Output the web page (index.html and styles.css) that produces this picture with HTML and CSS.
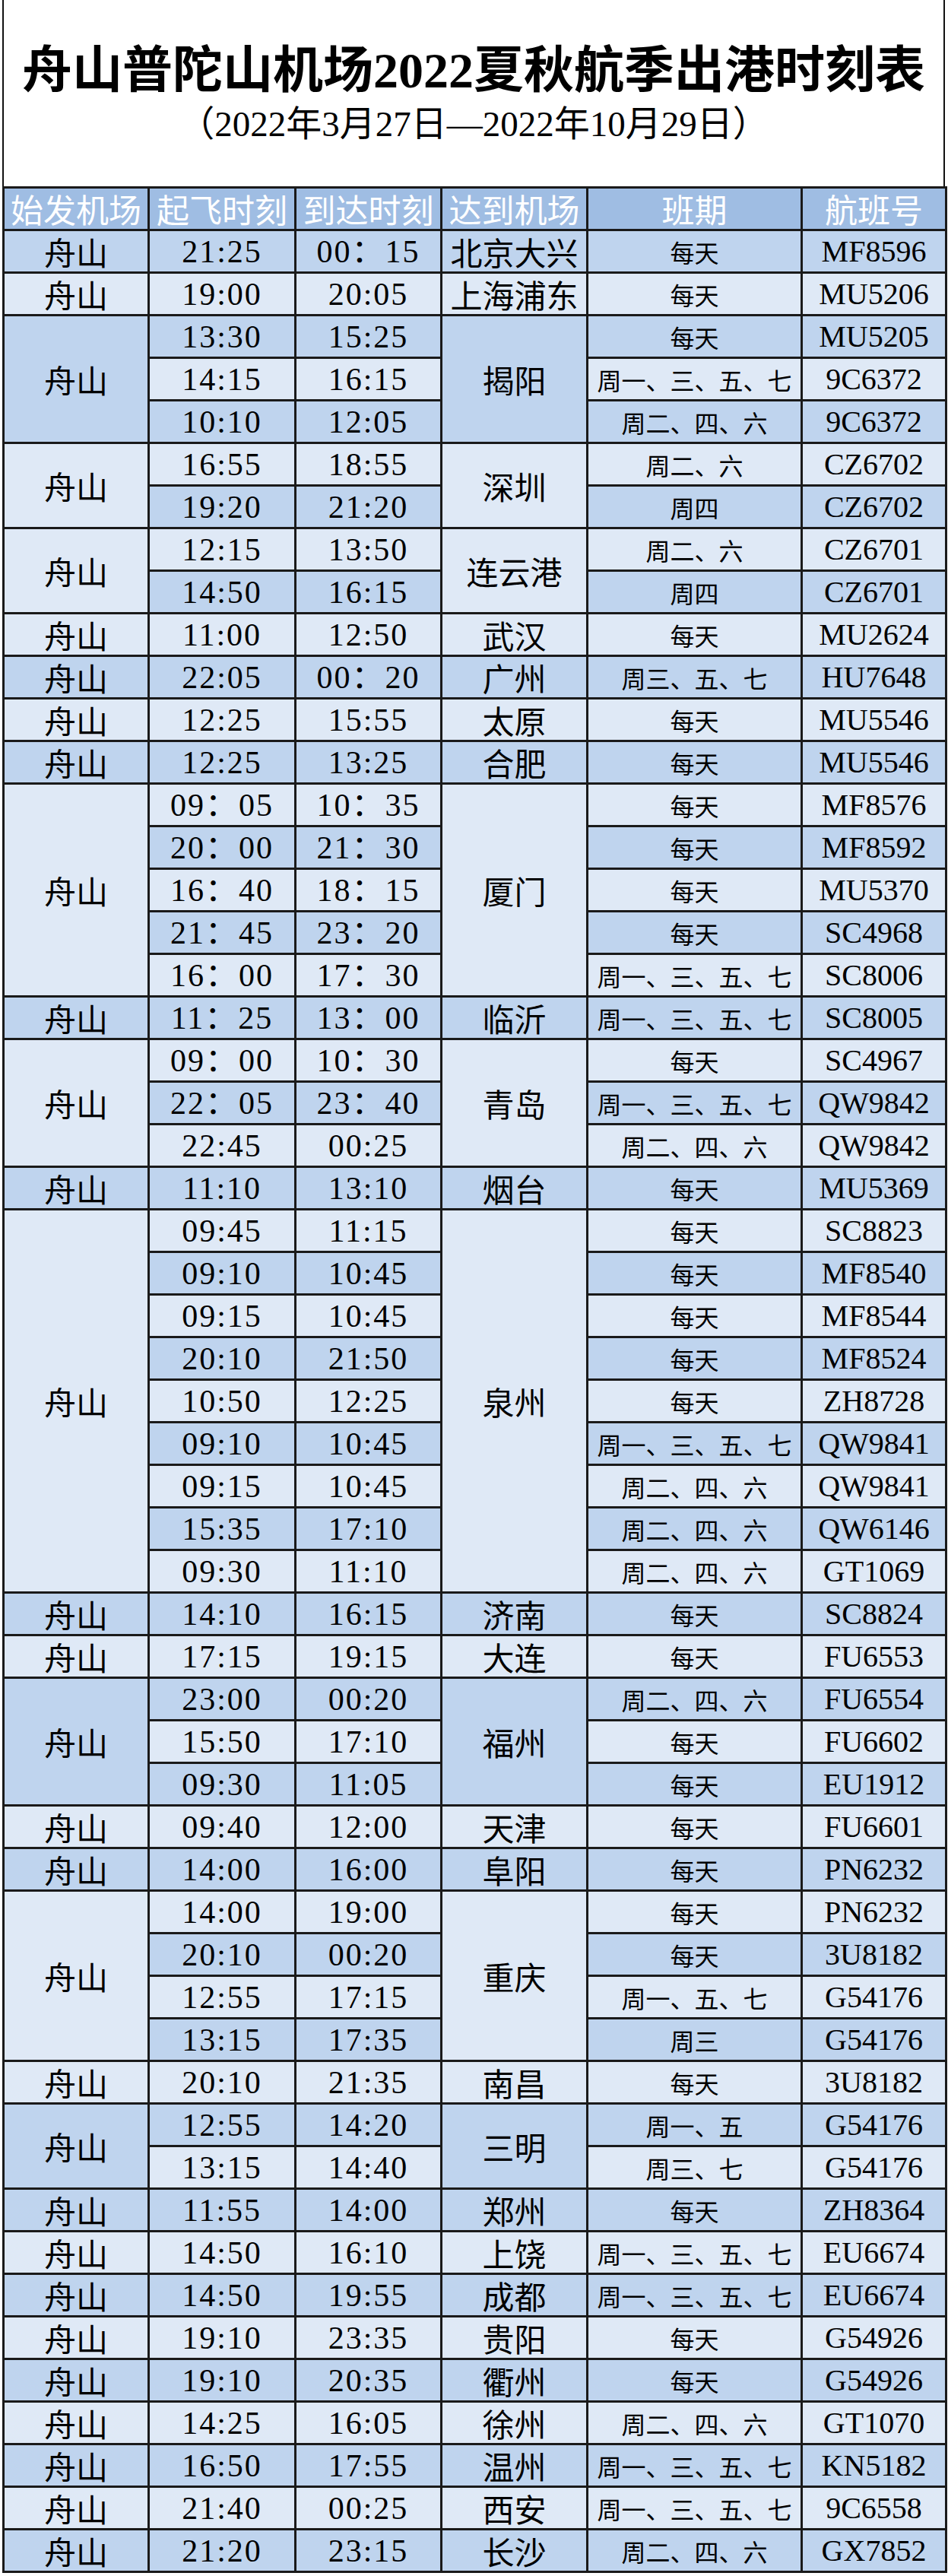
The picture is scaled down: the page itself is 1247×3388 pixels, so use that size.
FILE: index.html
```html
<!DOCTYPE html>
<html lang="zh-CN">
<head>
<meta charset="utf-8">
<title>舟山普陀山机场2022夏秋航季出港时刻表</title>
<link rel="stylesheet" href="styles.css">
</head>
<body>
<div class="sheet">
  <div class="title-box">
    <h1 class="title">舟山普陀山机场2022夏秋航季出港时刻表</h1>
    <p class="subtitle">（2022年3月27日—2022年10月29日）</p>
  </div>
  <table class="sched">
    <colgroup>
      <col class="c1"><col class="c2"><col class="c3"><col class="c4"><col class="c5"><col class="c6">
    </colgroup>
    <thead>
      <tr class="head"><th>始发机场</th><th>起飞时刻</th><th>到达时刻</th><th>达到机场</th><th>班期</th><th>航班号</th></tr>
    </thead>
    <tbody>
      <tr class="d"><td class="cn gd">舟山</td><td class="tm">21:25</td><td class="tm">00：15</td><td class="cn gd">北京大兴</td><td class="sc">每天</td><td class="fn">MF8596</td></tr>
      <tr class="l"><td class="cn gl">舟山</td><td class="tm">19:00</td><td class="tm">20:05</td><td class="cn gl">上海浦东</td><td class="sc">每天</td><td class="fn">MU5206</td></tr>
      <tr class="d"><td class="cn gd" rowspan="3">舟山</td><td class="tm">13:30</td><td class="tm">15:25</td><td class="cn gd" rowspan="3">揭阳</td><td class="sc">每天</td><td class="fn">MU5205</td></tr>
      <tr class="l"><td class="tm">14:15</td><td class="tm">16:15</td><td class="sc">周一、三、五、七</td><td class="fn">9C6372</td></tr>
      <tr class="d"><td class="tm">10:10</td><td class="tm">12:05</td><td class="sc">周二、四、六</td><td class="fn">9C6372</td></tr>
      <tr class="l"><td class="cn gl" rowspan="2">舟山</td><td class="tm">16:55</td><td class="tm">18:55</td><td class="cn gl" rowspan="2">深圳</td><td class="sc">周二、六</td><td class="fn">CZ6702</td></tr>
      <tr class="d"><td class="tm">19:20</td><td class="tm">21:20</td><td class="sc">周四</td><td class="fn">CZ6702</td></tr>
      <tr class="l"><td class="cn gd" rowspan="2">舟山</td><td class="tm">12:15</td><td class="tm">13:50</td><td class="cn gd" rowspan="2">连云港</td><td class="sc">周二、六</td><td class="fn">CZ6701</td></tr>
      <tr class="d"><td class="tm">14:50</td><td class="tm">16:15</td><td class="sc">周四</td><td class="fn">CZ6701</td></tr>
      <tr class="l"><td class="cn gl">舟山</td><td class="tm">11:00</td><td class="tm">12:50</td><td class="cn gl">武汉</td><td class="sc">每天</td><td class="fn">MU2624</td></tr>
      <tr class="d"><td class="cn gd">舟山</td><td class="tm">22:05</td><td class="tm">00：20</td><td class="cn gd">广州</td><td class="sc">周三、五、七</td><td class="fn">HU7648</td></tr>
      <tr class="l"><td class="cn gl">舟山</td><td class="tm">12:25</td><td class="tm">15:55</td><td class="cn gl">太原</td><td class="sc">每天</td><td class="fn">MU5546</td></tr>
      <tr class="d"><td class="cn gd">舟山</td><td class="tm">12:25</td><td class="tm">13:25</td><td class="cn gd">合肥</td><td class="sc">每天</td><td class="fn">MU5546</td></tr>
      <tr class="l"><td class="cn gl" rowspan="5">舟山</td><td class="tm">09：05</td><td class="tm">10：35</td><td class="cn gl" rowspan="5">厦门</td><td class="sc">每天</td><td class="fn">MF8576</td></tr>
      <tr class="d"><td class="tm">20：00</td><td class="tm">21：30</td><td class="sc">每天</td><td class="fn">MF8592</td></tr>
      <tr class="l"><td class="tm">16：40</td><td class="tm">18：15</td><td class="sc">每天</td><td class="fn">MU5370</td></tr>
      <tr class="d"><td class="tm">21：45</td><td class="tm">23：20</td><td class="sc">每天</td><td class="fn">SC4968</td></tr>
      <tr class="l"><td class="tm">16：00</td><td class="tm">17：30</td><td class="sc">周一、三、五、七</td><td class="fn">SC8006</td></tr>
      <tr class="d"><td class="cn gd">舟山</td><td class="tm">11：25</td><td class="tm">13：00</td><td class="cn gd">临沂</td><td class="sc">周一、三、五、七</td><td class="fn">SC8005</td></tr>
      <tr class="l"><td class="cn gl" rowspan="3">舟山</td><td class="tm">09：00</td><td class="tm">10：30</td><td class="cn gl" rowspan="3">青岛</td><td class="sc">每天</td><td class="fn">SC4967</td></tr>
      <tr class="d"><td class="tm">22：05</td><td class="tm">23：40</td><td class="sc">周一、三、五、七</td><td class="fn">QW9842</td></tr>
      <tr class="l"><td class="tm">22:45</td><td class="tm">00:25</td><td class="sc">周二、四、六</td><td class="fn">QW9842</td></tr>
      <tr class="d"><td class="cn gd">舟山</td><td class="tm">11:10</td><td class="tm">13:10</td><td class="cn gd">烟台</td><td class="sc">每天</td><td class="fn">MU5369</td></tr>
      <tr class="l"><td class="cn gl" rowspan="9">舟山</td><td class="tm">09:45</td><td class="tm">11:15</td><td class="cn gl" rowspan="9">泉州</td><td class="sc">每天</td><td class="fn">SC8823</td></tr>
      <tr class="d"><td class="tm">09:10</td><td class="tm">10:45</td><td class="sc">每天</td><td class="fn">MF8540</td></tr>
      <tr class="l"><td class="tm">09:15</td><td class="tm">10:45</td><td class="sc">每天</td><td class="fn">MF8544</td></tr>
      <tr class="d"><td class="tm">20:10</td><td class="tm">21:50</td><td class="sc">每天</td><td class="fn">MF8524</td></tr>
      <tr class="l"><td class="tm">10:50</td><td class="tm">12:25</td><td class="sc">每天</td><td class="fn">ZH8728</td></tr>
      <tr class="d"><td class="tm">09:10</td><td class="tm">10:45</td><td class="sc">周一、三、五、七</td><td class="fn">QW9841</td></tr>
      <tr class="l"><td class="tm">09:15</td><td class="tm">10:45</td><td class="sc">周二、四、六</td><td class="fn">QW9841</td></tr>
      <tr class="d"><td class="tm">15:35</td><td class="tm">17:10</td><td class="sc">周二、四、六</td><td class="fn">QW6146</td></tr>
      <tr class="l"><td class="tm">09:30</td><td class="tm">11:10</td><td class="sc">周二、四、六</td><td class="fn">GT1069</td></tr>
      <tr class="d"><td class="cn gd">舟山</td><td class="tm">14:10</td><td class="tm">16:15</td><td class="cn gd">济南</td><td class="sc">每天</td><td class="fn">SC8824</td></tr>
      <tr class="l"><td class="cn gl">舟山</td><td class="tm">17:15</td><td class="tm">19:15</td><td class="cn gl">大连</td><td class="sc">每天</td><td class="fn">FU6553</td></tr>
      <tr class="d"><td class="cn gd" rowspan="3">舟山</td><td class="tm">23:00</td><td class="tm">00:20</td><td class="cn gd" rowspan="3">福州</td><td class="sc">周二、四、六</td><td class="fn">FU6554</td></tr>
      <tr class="l"><td class="tm">15:50</td><td class="tm">17:10</td><td class="sc">每天</td><td class="fn">FU6602</td></tr>
      <tr class="d"><td class="tm">09:30</td><td class="tm">11:05</td><td class="sc">每天</td><td class="fn">EU1912</td></tr>
      <tr class="l"><td class="cn gl">舟山</td><td class="tm">09:40</td><td class="tm">12:00</td><td class="cn gl">天津</td><td class="sc">每天</td><td class="fn">FU6601</td></tr>
      <tr class="d"><td class="cn gd">舟山</td><td class="tm">14:00</td><td class="tm">16:00</td><td class="cn gd">阜阳</td><td class="sc">每天</td><td class="fn">PN6232</td></tr>
      <tr class="l"><td class="cn gl" rowspan="4">舟山</td><td class="tm">14:00</td><td class="tm">19:00</td><td class="cn gl" rowspan="4">重庆</td><td class="sc">每天</td><td class="fn">PN6232</td></tr>
      <tr class="d"><td class="tm">20:10</td><td class="tm">00:20</td><td class="sc">每天</td><td class="fn">3U8182</td></tr>
      <tr class="l"><td class="tm">12:55</td><td class="tm">17:15</td><td class="sc">周一、五、七</td><td class="fn">G54176</td></tr>
      <tr class="d"><td class="tm">13:15</td><td class="tm">17:35</td><td class="sc">周三</td><td class="fn">G54176</td></tr>
      <tr class="l"><td class="cn gd">舟山</td><td class="tm">20:10</td><td class="tm">21:35</td><td class="cn gd">南昌</td><td class="sc">每天</td><td class="fn">3U8182</td></tr>
      <tr class="d"><td class="cn gl" rowspan="2">舟山</td><td class="tm">12:55</td><td class="tm">14:20</td><td class="cn gl" rowspan="2">三明</td><td class="sc">周一、五</td><td class="fn">G54176</td></tr>
      <tr class="l"><td class="tm">13:15</td><td class="tm">14:40</td><td class="sc">周三、七</td><td class="fn">G54176</td></tr>
      <tr class="d"><td class="cn gd">舟山</td><td class="tm">11:55</td><td class="tm">14:00</td><td class="cn gd">郑州</td><td class="sc">每天</td><td class="fn">ZH8364</td></tr>
      <tr class="l"><td class="cn gl">舟山</td><td class="tm">14:50</td><td class="tm">16:10</td><td class="cn gl">上饶</td><td class="sc">周一、三、五、七</td><td class="fn">EU6674</td></tr>
      <tr class="d"><td class="cn gd">舟山</td><td class="tm">14:50</td><td class="tm">19:55</td><td class="cn gd">成都</td><td class="sc">周一、三、五、七</td><td class="fn">EU6674</td></tr>
      <tr class="l"><td class="cn gl">舟山</td><td class="tm">19:10</td><td class="tm">23:35</td><td class="cn gl">贵阳</td><td class="sc">每天</td><td class="fn">G54926</td></tr>
      <tr class="d"><td class="cn gd">舟山</td><td class="tm">19:10</td><td class="tm">20:35</td><td class="cn gd">衢州</td><td class="sc">每天</td><td class="fn">G54926</td></tr>
      <tr class="l"><td class="cn gl">舟山</td><td class="tm">14:25</td><td class="tm">16:05</td><td class="cn gl">徐州</td><td class="sc">周二、四、六</td><td class="fn">GT1070</td></tr>
      <tr class="d"><td class="cn gd">舟山</td><td class="tm">16:50</td><td class="tm">17:55</td><td class="cn gd">温州</td><td class="sc">周一、三、五、七</td><td class="fn">KN5182</td></tr>
      <tr class="l"><td class="cn gl">舟山</td><td class="tm">21:40</td><td class="tm">00:25</td><td class="cn gl">西安</td><td class="sc">周一、三、五、七</td><td class="fn">9C6558</td></tr>
      <tr class="d"><td class="cn gd">舟山</td><td class="tm">21:20</td><td class="tm">23:15</td><td class="cn gd">长沙</td><td class="sc">周二、四、六</td><td class="fn">GX7852</td></tr>
    </tbody>
  </table>
</div>
</body>
</html>
```

FILE: styles.css
```css
html, body {
  margin: 0;
  padding: 0;
  background: #ffffff;
}

body {
  font-family: "Noto Sans CJK SC", sans-serif;
  color: #000;
}

.sheet {
  width: 1240px;
  margin-left: 3px;
}

.title-box {
  box-sizing: border-box;
  height: 245px;
  border-left: 2px solid #111;
  border-right: 2px solid #111;
  display: flex;
  flex-direction: column;
  align-items: center;
  padding-top: 58px;
}

.title {
  margin: 0;
  font-family: "Liberation Serif", "Noto Sans CJK SC", serif;
  font-weight: 700;
  font-size: 66px;
  line-height: 70px;
  white-space: nowrap;
}

.subtitle {
  margin: 10px 0 0;
  font-family: "Liberation Serif", "Noto Sans CJK SC", serif;
  font-size: 47px;
  line-height: 50px;
  white-space: nowrap;
}

.sched {
  width: 1240px;
  border-collapse: collapse;
  table-layout: fixed;
}

.c1 { width: 191px; }
.c2 { width: 193px; }
.c3 { width: 192px; }
.c4 { width: 192px; }
.c5 { width: 282px; }
.c6 { width: 190px; }

.sched tr {
  height: 56px;
}

.sched th,
.sched td {
  border: 3px solid #1a1a1a;
  padding: 0;
  text-align: center;
  vertical-align: middle;
  white-space: nowrap;
  line-height: 1;
}

.sched th {
  background: #9fbde3;
  color: #ffffff;
  font-family: "Noto Sans CJK SC", sans-serif;
  font-weight: 400;
  font-size: 43px;
}

.sched tr.d td { background: #bfd4ee; }
.sched tr.l td { background: #dfe9f6; }
.sched td.gd { background: #bfd4ee; }
.sched td.gl { background: #dfe9f6; }

.cn {
  font-family: "Noto Sans CJK SC", sans-serif;
  font-size: 42px;
}

.tm {
  font-family: "Liberation Serif", "Noto Sans CJK SC", serif;
  font-size: 42px;
  letter-spacing: 2px;
}

.sc {
  font-family: "Noto Sans CJK SC", sans-serif;
  font-size: 32px;
}

.fn {
  font-family: "Liberation Serif", serif;
  font-size: 40px;
}
```
